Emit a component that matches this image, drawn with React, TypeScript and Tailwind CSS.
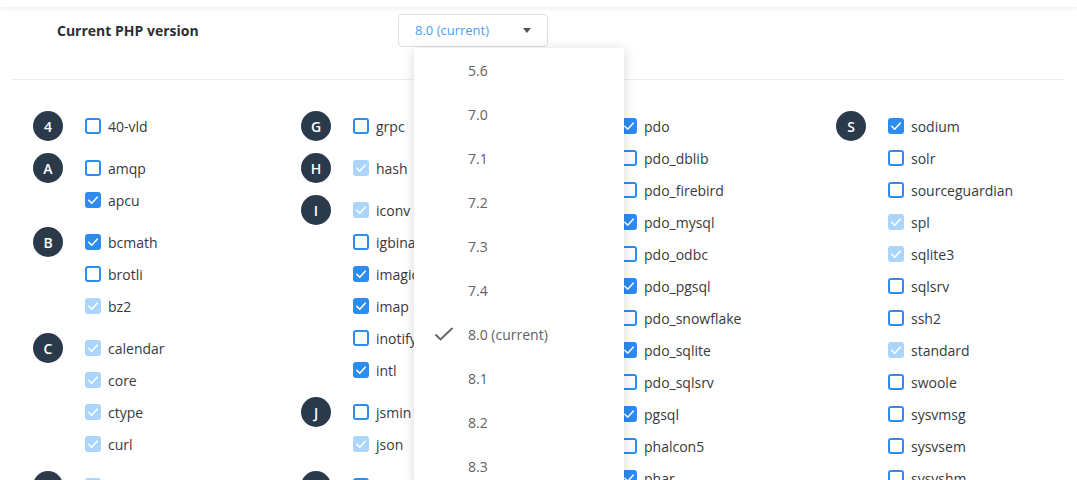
import React from "react";

type Ext = { name: string; state: "off" | "on" | "fixed" };
type Group = { letter: string; items: Ext[] };

const off = (name: string): Ext => ({ name, state: "off" });
const on = (name: string): Ext => ({ name, state: "on" });
const fixed = (name: string): Ext => ({ name, state: "fixed" });

// one list per column, as the page lays them out
const COLUMNS: Group[][] = [
  [
    { letter: "4", items: [off("40-vld")] },
    { letter: "A", items: [off("amqp"), on("apcu")] },
    { letter: "B", items: [on("bcmath"), off("brotli"), fixed("bz2")] },
    { letter: "C", items: [fixed("calendar"), fixed("core"), fixed("ctype"), fixed("curl")] },
    { letter: "D", items: [fixed("date"), fixed("dom")] },
  ],
  [
    { letter: "G", items: [off("grpc")] },
    { letter: "H", items: [fixed("hash")] },
    {
      letter: "I",
      items: [fixed("iconv"), off("igbinary"), on("imagick"), on("imap"), off("inotify"), on("intl")],
    },
    { letter: "J", items: [off("jsmin"), fixed("json")] },
    { letter: "L", items: [off("ldap")] },
  ],
  [
    {
      letter: "P",
      items: [
        on("pdo"),
        off("pdo_dblib"),
        off("pdo_firebird"),
        on("pdo_mysql"),
        off("pdo_odbc"),
        on("pdo_pgsql"),
        off("pdo_snowflake"),
        on("pdo_sqlite"),
        off("pdo_sqlsrv"),
        on("pgsql"),
        off("phalcon5"),
        on("phar"),
      ],
    },
  ],
  [
    {
      letter: "S",
      items: [
        on("sodium"),
        off("solr"),
        off("sourceguardian"),
        fixed("spl"),
        fixed("sqlite3"),
        off("sqlsrv"),
        off("ssh2"),
        fixed("standard"),
        off("swoole"),
        off("sysvmsg"),
        off("sysvsem"),
        off("sysvshm"),
      ],
    },
  ],
];

const VERSIONS = ["5.6", "7.0", "7.1", "7.2", "7.3", "7.4", "8.0 (current)", "8.1", "8.2", "8.3"];

function Tick({ className }: { className?: string }) {
  return (
    <svg viewBox="0 0 16 16" className={className} fill="none">
      <path d="M3.8 8.3l2.9 2.9 5.5-6" stroke="currentColor" strokeWidth="1.6" strokeLinecap="round" strokeLinejoin="round" />
    </svg>
  );
}

function Checkbox({ state }: { state: Ext["state"] }) {
  if (state === "off") {
    return <span className="w-4 h-4 shrink-0 rounded-[3px] border-2 border-[#2d8cf0] bg-white" />;
  }
  return (
    <span
      className={
        state === "on"
          ? "w-4 h-4 shrink-0 rounded-[3px] bg-[#2d8cf0] text-white flex items-center justify-center"
          : "w-4 h-4 shrink-0 rounded-[3px] bg-[#abd5fa] text-white flex items-center justify-center"
      }
    >
      <Tick className="w-4 h-4" />
    </span>
  );
}

function GroupBlock({ group }: { group: Group }) {
  return (
    <div className="flex">
      <div className="w-[30px] h-[30px] mt-px shrink-0 rounded-full bg-[#2a3a4b] text-white text-[14px] font-semibold flex items-center justify-center">
        {group.letter}
      </div>
      <div className="flex flex-col ml-[22px]">
        {group.items.map((ext) => (
          <label key={ext.name} className="h-8 flex items-center gap-[7px] text-[14px] text-[#363a40] whitespace-nowrap">
            <Checkbox state={ext.state} />
            <span>{ext.name}</span>
          </label>
        ))}
      </div>
    </div>
  );
}

export default function App() {
  return (
    <div
      className="relative h-[480px] overflow-hidden bg-white"
      style={{ fontFamily: '"Open Sans", "Liberation Sans", sans-serif' }}
    >
      {/* header edge */}
      <div className="h-[7px] bg-white shadow-[0_1px_5px_rgba(0,0,0,0.09)]" />

      {/* version row */}
      <div className="flex items-center pt-[7px] pb-8">
        <div className="w-[398px] pl-[57px] text-[14px] font-bold text-[#2c2f33]">Current PHP version</div>
        <button className="w-[150px] h-[33px] rounded-[4px] border border-[#dcdfe6] bg-white flex items-center justify-between pl-4 pr-4">
          <span className="text-[13px] text-[#4a9ff5]">8.0 (current)</span>
          <span className="w-0 h-0 border-l-[4px] border-r-[4px] border-t-[5px] border-l-transparent border-r-transparent border-t-[#555]" />
        </button>
      </div>

      <div className="mx-3 border-t border-[#ebedf0]" />

      {/* extensions */}
      <div className="pt-[30px] pl-[33px] grid grid-cols-[268px_268px_267px_268px] w-[1071px]">
        {COLUMNS.map((col, i) => (
          <div key={i} className="flex flex-col gap-[10px]">
            {col.map((g) => (
              <GroupBlock key={g.letter} group={g} />
            ))}
          </div>
        ))}
      </div>

      {/* open version menu */}
      <div className="absolute left-[414px] top-[48px] w-[210px] h-[440px] bg-white shadow-[0_2px_12px_rgba(0,0,0,0.16)]">
        {VERSIONS.map((v) => (
          <div key={v} className="relative h-11 flex items-center pl-[54px] text-[14px] text-[#5f6266]">
            {v === "8.0 (current)" && (
              <svg viewBox="0 0 20 14" className="absolute left-[20px] w-[20px] h-[14px] text-[#606266]" fill="none">
                <path d="M1.5 7.5l5 5 12-11.5" stroke="currentColor" strokeWidth="1.8" />
              </svg>
            )}
            {v}
          </div>
        ))}
      </div>
    </div>
  );
}
